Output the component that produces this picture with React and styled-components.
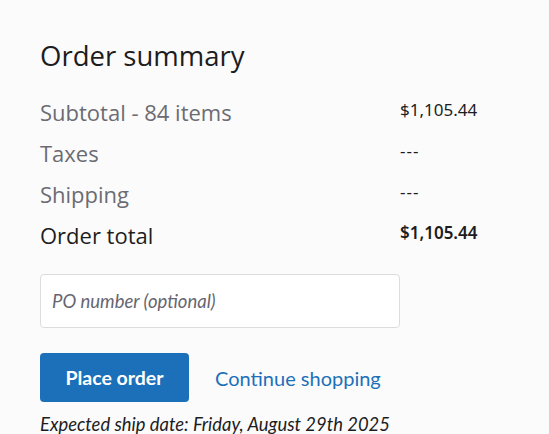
import React from "react";
import styled, { createGlobalStyle } from "styled-components";

const GlobalStyle = createGlobalStyle`
  html, body {
    margin: 0;
    padding: 0;
    background: #fbfbfb;
  }
  * {
    box-sizing: border-box;
  }
`;

const Summary = styled.section`
  padding: 37px 0 0 40px;
  width: 549px;
  height: 434px;
  overflow: hidden;
`;

const Title = styled.h2`
  margin: 0 0 16px;
  font-family: "Open Sans", "Noto Sans", sans-serif;
  font-weight: 400;
  font-size: 27.5px;
  line-height: 38px;
  color: #1d1d1f;
`;

const Lines = styled.div`
  display: grid;
  grid-template-columns: 360px auto;
  grid-auto-rows: 41px;
  width: 470px;
`;

const Label = styled.div`
  display: flex;
  align-items: center;
  font-family: "Open Sans", "Noto Sans", sans-serif;
  font-size: 22px;
  color: ${p => (p.$total ? "#1d1d1f" : "#6b6b73")};
  font-weight: ${p => (p.$total ? 500 : 400)};
`;

const Value = styled.div`
  display: flex;
  align-items: center;
  padding-bottom: 5px;
  font-family: "Noto Sans", "Open Sans", sans-serif;
  font-size: 17px;
  letter-spacing: ${p => (p.$dash ? "1px" : "0")};
  color: #1d1d1f;
  font-weight: ${p => (p.$total ? 600 : 400)};
`;

const PoInput = styled.input`
  display: block;
  margin-top: 19px;
  width: 360px;
  height: 54px;
  padding: 0 11px;
  border: 1px solid #dcdcde;
  border-radius: 4px;
  background: #fff;
  font-family: Lato, "Open Sans", sans-serif;
  font-size: 18.5px;
  font-style: italic;
  color: #1d1d1f;
  outline: none;

  &::placeholder {
    color: #666670;
  }
`;

const Actions = styled.div`
  display: flex;
  align-items: center;
  gap: 26px;
  margin-top: 25px;
`;

const PlaceButton = styled.button`
  width: 149px;
  height: 49px;
  border: none;
  border-radius: 4px;
  background: #1b70b9;
  color: #fff;
  font-family: Lato, "Open Sans", sans-serif;
  font-size: 19.5px;
  font-weight: 700;
  cursor: pointer;
`;

const LinkButton = styled.a`
  font-family: Lato, "Open Sans", sans-serif;
  font-size: 20px;
  color: #1b70b9;
  text-decoration: none;
  cursor: pointer;
`;

const ShipDate = styled.p`
  margin: 11px 0 0;
  font-family: Lato, "Open Sans", sans-serif;
  font-size: 18.4px;
  font-style: italic;
  color: #1d1d1f;
`;

const lines = [
  { label: "Subtotal - 84 items", value: "$1,105.44" },
  { label: "Taxes", value: "---" },
  { label: "Shipping", value: "---" },
  { label: "Order total", value: "$1,105.44", total: true },
];

const App = () => {
  const [po, setPo] = React.useState("");

  return (
    <>
      <GlobalStyle />
      <Summary>
        <Title>Order summary</Title>
        <Lines>
          {lines.map(line => (
            <React.Fragment key={line.label}>
              <Label $total={line.total}>{line.label}</Label>
              <Value $total={line.total} $dash={line.value === "---"}>
                {line.value}
              </Value>
            </React.Fragment>
          ))}
        </Lines>
        <PoInput
          type="text"
          placeholder="PO number (optional)"
          value={po}
          onChange={e => setPo(e.target.value)}
        />
        <Actions>
          <PlaceButton>Place order</PlaceButton>
          <LinkButton>Continue shopping</LinkButton>
        </Actions>
        <ShipDate>Expected ship date: Friday, August 29th 2025</ShipDate>
      </Summary>
    </>
  );
};

export default App;
